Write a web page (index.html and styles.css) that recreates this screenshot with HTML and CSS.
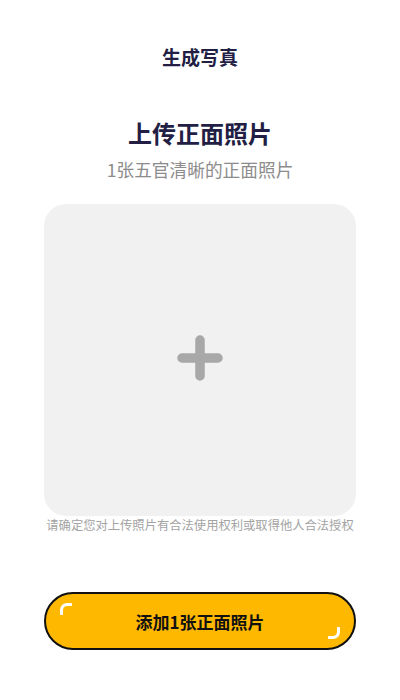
FILE: index.html
```html
<!DOCTYPE html>
<html lang="zh">
<head>
<meta charset="utf-8">
<title>生成写真</title>
<link rel="stylesheet" href="styles.css">
</head>
<body>
<div class="page">
  <header class="topbar">生成写真</header>
  <h1 class="heading">上传正面照片</h1>
  <p class="sub">1张五官清晰的正面照片</p>
  <div class="upload">
    <svg class="plus" width="46" height="46" viewBox="0 0 46 46">
      <path d="M23 5 V41 M5 23 H41" stroke="#a8a8a8" stroke-width="9.5" stroke-linecap="round" fill="none"/>
    </svg>
  </div>
  <p class="notice">请确定您对上传照片有合法使用权利或取得他人合法授权</p>
  <div class="spacer"></div>
  <button class="cta">
    <svg class="mark mark-tl" width="12" height="12" viewBox="0 0 12 12"><path d="M1.5 11 V7 A5.5 5.5 0 0 1 7 1.5 H11" stroke="#fff" stroke-width="3" stroke-linecap="round" fill="none"/></svg>
    添加1张正面照片
    <svg class="mark mark-br" width="12" height="12" viewBox="0 0 12 12"><path d="M10.5 1 V5 A5.5 5.5 0 0 1 5 10.5 H1" stroke="#fff" stroke-width="3" stroke-linecap="round" fill="none"/></svg>
  </button>
</div>
</body>
</html>
```
FILE: styles.css
```css
* { box-sizing: border-box; }
html, body { margin: 0; padding: 0; background: #fff; }
body {
  font-family: "Noto Sans CJK SC", "Noto Sans", sans-serif;
  width: 400px;
  height: 700px;
  overflow: hidden;
}
.page {
  display: flex;
  flex-direction: column;
  align-items: center;
  height: 700px;
}
.topbar {
  margin-top: 44px;
  font-size: 19px;
  line-height: 26px;
  font-weight: 700;
  color: #221e44;
}
.heading {
  margin: 46px 0 0;
  font-size: 24px;
  line-height: 34px;
  font-weight: 700;
  color: #221e44;
}
.sub {
  margin: 6px 0 0;
  font-size: 17.7px;
  line-height: 26px;
  color: #8c8c8c;
}
.upload {
  margin-top: 22px;
  width: 312px;
  height: 312px;
  border-radius: 22px;
  background: #f1f1f1;
  display: flex;
  align-items: center;
  justify-content: center;
  padding-bottom: 5px;
}
.notice {
  margin: 0;
  font-size: 12.3px;
  line-height: 18px;
  color: #a3a3a3;
}
.spacer { height: 58px; }
.cta {
  position: relative;
  width: 312px;
  height: 58px;
  border: 2px solid #111;
  border-radius: 29px;
  background: #ffb800;
  font-family: inherit;
  font-size: 17px;
  font-weight: 700;
  color: #111;
  display: flex;
  align-items: center;
  justify-content: center;
  padding: 0;
}
.mark { position: absolute; }
.mark-tl { left: 14px; top: 9px; }
.mark-br { right: 14px; bottom: 9px; }
```
